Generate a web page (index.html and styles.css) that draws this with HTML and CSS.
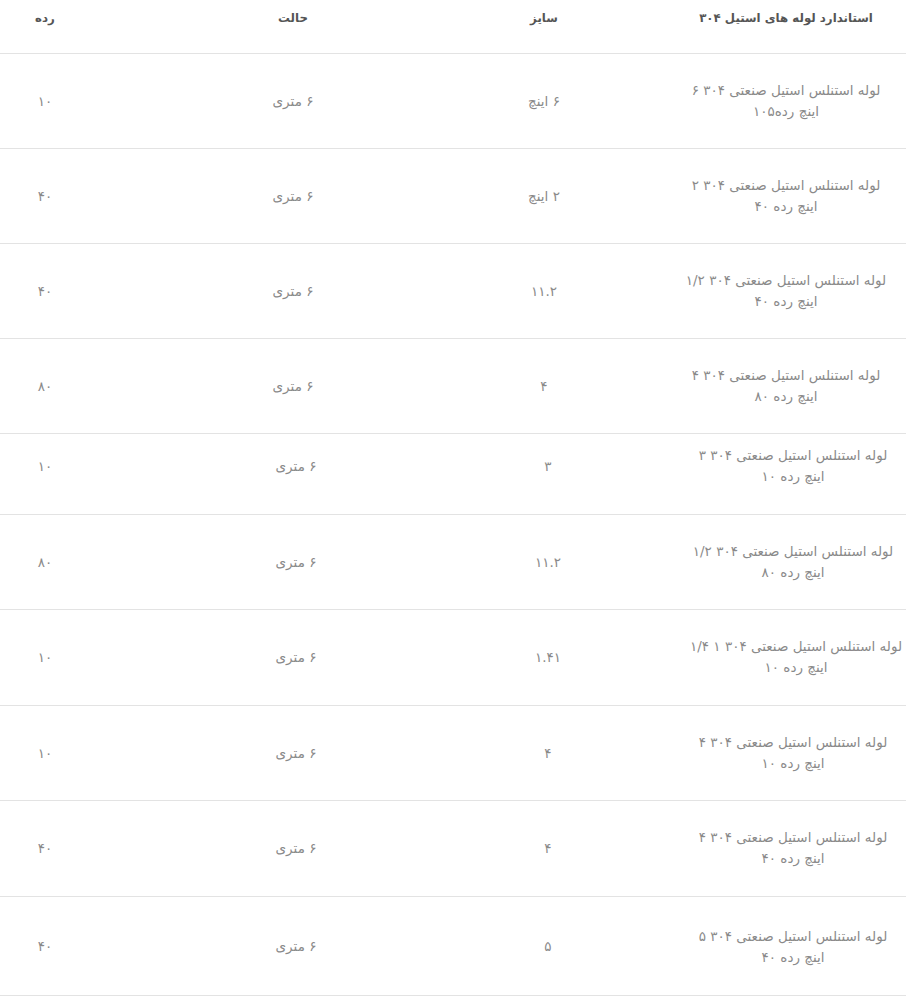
FILE: index.html
```html
<!DOCTYPE html>
<html lang="fa" dir="rtl">
<head>
<meta charset="utf-8">
<title>استاندارد لوله های استیل ۳۰۴</title>
<link rel="stylesheet" href="styles.css">
</head>
<body>
<div class="wrap">
  <div class="table table-a">
    <div class="row head">
      <div class="cell">استاندارد لوله های استیل ۳۰۴</div>
      <div class="cell">سایز</div>
      <div class="cell">حالت</div>
      <div class="cell">رده</div>
    </div>
    <div class="row">
      <div class="cell name">لوله استنلس استیل صنعتی ۳۰۴ ۶<br>اینچ رده۱۰۵</div>
      <div class="cell">۶ اینچ</div>
      <div class="cell">۶ متری</div>
      <div class="cell">۱۰</div>
    </div>
    <div class="row">
      <div class="cell name">لوله استنلس استیل صنعتی ۳۰۴ ۲<br>اینچ رده ۴۰</div>
      <div class="cell">۲ اینچ</div>
      <div class="cell">۶ متری</div>
      <div class="cell">۴۰</div>
    </div>
    <div class="row">
      <div class="cell name">لوله استنلس استیل صنعتی ۳۰۴ ۱/۲<br>اینچ رده ۴۰</div>
      <div class="cell">۱۱.۲</div>
      <div class="cell">۶ متری</div>
      <div class="cell">۴۰</div>
    </div>
    <div class="row">
      <div class="cell name">لوله استنلس استیل صنعتی ۳۰۴ ۴<br>اینچ رده ۸۰</div>
      <div class="cell">۴</div>
      <div class="cell">۶ متری</div>
      <div class="cell">۸۰</div>
    </div>
  </div>
  <div class="table table-b">
    <div class="row short">
      <div class="cell name">لوله استنلس استیل صنعتی ۳۰۴ ۳<br>اینچ رده ۱۰</div>
      <div class="cell">۳</div>
      <div class="cell">۶ متری</div>
      <div class="cell">۱۰</div>
    </div>
    <div class="row">
      <div class="cell name">لوله استنلس استیل صنعتی ۳۰۴ ۱/۲<br>اینچ رده ۸۰</div>
      <div class="cell">۱۱.۲</div>
      <div class="cell">۶ متری</div>
      <div class="cell">۸۰</div>
    </div>
    <div class="row plus1">
      <div class="cell name wide">لوله استنلس استیل صنعتی ۳۰۴ ۱ ۱/۴<br>اینچ رده ۱۰</div>
      <div class="cell">۱.۴۱</div>
      <div class="cell">۶ متری</div>
      <div class="cell">۱۰</div>
    </div>
    <div class="row">
      <div class="cell name">لوله استنلس استیل صنعتی ۳۰۴ ۴<br>اینچ رده ۱۰</div>
      <div class="cell">۴</div>
      <div class="cell">۶ متری</div>
      <div class="cell">۱۰</div>
    </div>
    <div class="row plus1">
      <div class="cell name">لوله استنلس استیل صنعتی ۳۰۴ ۴<br>اینچ رده ۴۰</div>
      <div class="cell">۴</div>
      <div class="cell">۶ متری</div>
      <div class="cell">۴۰</div>
    </div>
    <div class="row last">
      <div class="cell name">لوله استنلس استیل صنعتی ۳۰۴ ۵<br>اینچ رده ۴۰</div>
      <div class="cell">۵</div>
      <div class="cell">۶ متری</div>
      <div class="cell">۴۰</div>
    </div>
  </div>
</div>
</body>
</html>
```

FILE: styles.css
```css
html, body {
  margin: 0;
  padding: 0;
  background: #ffffff;
}

body {
  font-family: "DejaVu Sans", sans-serif;
  font-size: 13.5px;
  color: #8a8a8a;
}

.wrap {
  width: 906px;
  overflow: hidden;
  direction: rtl;
}

.table {
  display: flex;
  flex-direction: column;
}

.table-a {
  width: 980px;
}

.table-b {
  width: 992px;
}

.row {
  display: grid;
  align-items: center;
  border-bottom: 1px solid #e3e3e3;
}

.table-a .row {
  grid-template-columns: 240px 244px 258px 238px;
}

.table-b .row {
  grid-template-columns: 226px 264px 240px 262px;
}

.cell {
  text-align: center;
  line-height: 21px;
  white-space: nowrap;
}

.name {
  padding: 26px 0;
}

.head {
  align-items: start;
}

.head .cell {
  padding: 8px 0 24px;
  line-height: 21px;
  font-weight: bold;
  color: #555555;
  font-size: 11.8px;
}

.short .name {
  padding: 11px 0 27px;
}

.short .cell:not(.name) {
  padding-bottom: 16px;
}

.plus1 .name {
  padding-bottom: 27px;
}

.last .name {
  padding: 29px 0 27px;
}

.wide {
  padding-left: 6px;
}
```
